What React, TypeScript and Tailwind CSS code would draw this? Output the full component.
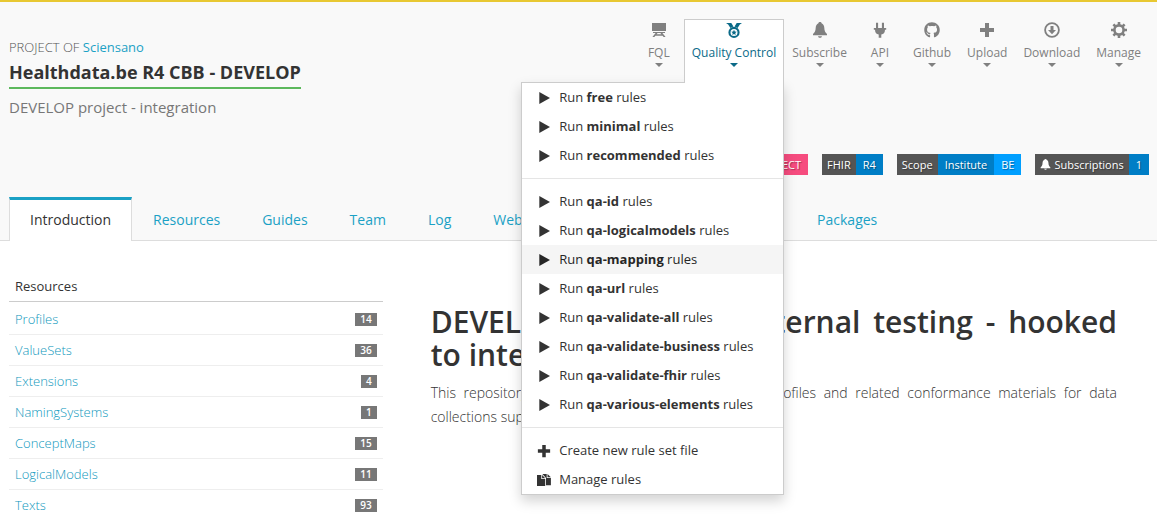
import type { ReactNode } from "react";
import { FaGithub } from "react-icons/fa";

type IconProps = { className?: string };

function ScreenIcon({ className }: IconProps) {
  return (
    <svg viewBox="0 0 16 16" fill="currentColor" className={className} aria-hidden="true">
      <path d="M1 1h14v8H1zM2 10h12v1H2z" />
      <path d="M4.600 11h2l-1 1.300h4.800l-1-1.300h2l3.200 4h-2l-1-1.300H4.400L3.400 15h-2z" />
    </svg>
  );
}

function MedalIcon({ className }: IconProps) {
  return (
    <svg viewBox="0 0 16 16" fill="currentColor" className={className} aria-hidden="true">
      <path d="M0 1h5.300l2.100 3.600-3 1.500L2.200 2.400zM16 1h-5.300L8.600 4.600l3 1.500 2.200-3.700z" />
      <path
        fillRule="evenodd"
        d="M8 4.800a5.600 5.600 0 1 1 0 11.200A5.600 5.600 0 0 1 8 4.800zm0 2.100a3.500 3.500 0 1 0 0 7 3.500 3.500 0 0 0 0-7z"
      />
      <path d="M8 7.800l.8 1.700 1.900.2-1.400 1.300.4 1.900L8 12l-1.700.9.4-1.900-1.400-1.300 1.900-.2z" />
    </svg>
  );
}

function BellIcon({ className }: IconProps) {
  return (
    <svg viewBox="0 0 16 16" fill="currentColor" className={className} aria-hidden="true">
      <path d="M8 0c.9 0 1.500.5 1.600 1.200 1.600.7 2.600 2.300 2.700 4.500.1 3 .9 4.700 2.700 6.300v1.300H1V12c1.800-1.600 2.600-3.300 2.700-6.300.1-2.200 1.100-3.800 2.700-4.500C6.500.5 7.100 0 8 0zM6 14.200h4c-.3 1-1 1.500-2 1.500s-1.700-.5-2-1.500z" />
    </svg>
  );
}

function PlugIcon({ className }: IconProps) {
  return (
    <svg viewBox="0 0 16 16" fill="currentColor" className={className} aria-hidden="true">
      <path d="M4 .8h2.100V6H4zM9.900.8H12V6H9.900zM1.800 6h12.400v1.700H13c0 2.900-1.500 4.500-3.700 4.900v3.200H6.700v-3.200C4.500 12.200 3 10.600 3 7.700H1.800z" />
    </svg>
  );
}

function PlusIcon({ className }: IconProps) {
  return (
    <svg viewBox="0 0 16 16" fill="currentColor" className={className} aria-hidden="true">
      <path d="M6 1h4v5h5v4h-5v5H6v-5H1V6h5z" />
    </svg>
  );
}

function DownloadIcon({ className }: IconProps) {
  return (
    <svg viewBox="0 0 16 16" fill="currentColor" className={className} aria-hidden="true">
      <circle cx="8" cy="8" r="6.900" fill="none" stroke="currentColor" strokeWidth="1.800" />
      <path d="M6.500 4h3v4H12l-4 4.300L4 8h2.500z" />
    </svg>
  );
}

function GearIcon({ className }: IconProps) {
  return (
    <svg viewBox="0 0 16 16" className={className} aria-hidden="true">
      <circle cx="8" cy="8" r="4.600" fill="none" stroke="currentColor" strokeWidth="2.600" />
      <g stroke="currentColor" strokeWidth="2.600">
        <path d="M8 0v3M8 13v3M0 8h3M13 8h3M2.400 2.400l2.100 2.100M11.500 11.500l2.100 2.100M2.400 13.600l2.100-2.100M11.500 4.500l2.100-2.100" />
      </g>
    </svg>
  );
}

function PlayIcon({ className }: IconProps) {
  return (
    <svg viewBox="0 0 14 14" fill="currentColor" className={className} aria-hidden="true">
      <path d="M2.300 1 13 7 2.300 13z" />
    </svg>
  );
}

function FilesIcon({ className }: IconProps) {
  return (
    <svg viewBox="0 0 14 14" fill="currentColor" className={className} aria-hidden="true">
      <path d="M0 1.900h4.300V6h3.900v7.100H0zM5.100 1.900l3.100 3.300H5.100z" />
      <path d="M5.400.9h4.300V5h4.200v7.200H9V4.900zM10.500.9l3.400 3.300h-3.400z" />
    </svg>
  );
}

function Caret() {
  return (
    <svg viewBox="0 0 8 4" fill="currentColor" className="h-1 w-2" aria-hidden="true">
      <path d="M0 0h8L4 4z" />
    </svg>
  );
}

function NavButton({ icon, label, open = false }: { icon: ReactNode; label: string; open?: boolean }) {
  return (
    <button
      type="button"
      aria-expanded={open}
      className={
        open
          ? "relative z-20 flex h-16 min-w-[50px] flex-col items-center border border-b-0 border-[#ccc] bg-white px-[7px] pt-0.5 text-[#0b6a88]"
          : "flex h-16 min-w-[50px] flex-col items-center border border-b-0 border-transparent px-[7px] pt-0.5 text-[#808080]"
      }
    >
      {icon}
      <span className="mt-[5px] text-xs leading-5">{label}</span>
      <Caret />
    </button>
  );
}

const ruleGroups = [
  ["free", "minimal", "recommended"],
  [
    "qa-id",
    "qa-logicalmodels",
    "qa-mapping",
    "qa-url",
    "qa-validate-all",
    "qa-validate-business",
    "qa-validate-fhir",
    "qa-various-elements",
  ],
];

function MenuItem({ icon, active = false, children }: { icon: ReactNode; active?: boolean; children: ReactNode }) {
  return (
    <li>
      <button
        type="button"
        className={
          active
            ? "flex w-full items-center gap-2 bg-[#f5f5f5] px-[15px] py-[5px] text-left text-[#262626]"
            : "flex w-full items-center gap-2 px-[15px] py-[5px] text-left"
        }
      >
        {icon}
        <span>{children}</span>
      </button>
    </li>
  );
}

function RulesMenu() {
  return (
    <div className="absolute top-[63px] right-0 z-10 w-[263px] border border-[#ccc] bg-white text-[13px] leading-[19px] text-[#333] shadow-[0_6px_12px_rgba(0,0,0,0.175)]">
      {ruleGroups.map((group) => (
        <ul key={group[0]} className="mb-2 border-b border-[#e5e5e5] pb-2">
          {group.map((rule) => (
            <MenuItem key={rule} active={rule === "qa-mapping"} icon={<PlayIcon className="size-3.5" />}>
              Run <b className="font-bold">{rule}</b> rules
            </MenuItem>
          ))}
        </ul>
      ))}
      <ul>
        <MenuItem icon={<PlusIcon className="size-3.5" />}>Create new rule set file</MenuItem>
        <MenuItem icon={<FilesIcon className="size-3.5" />}>Manage rules</MenuItem>
      </ul>
    </div>
  );
}

function Badges() {
  return (
    <div className="flex gap-3.5 text-[11px] leading-[21px] whitespace-nowrap text-white text-shadow-[1px_1px_1px_rgba(0,0,0,0.35)]">
      <span className="bg-[#f64c7f] px-[7px]">PROJECT</span>
      <span className="flex">
        <span className="bg-[#555] px-[5px]">FHIR</span>
        <span className="bg-[#007ec6] px-[7px]">R4</span>
      </span>
      <span className="flex">
        <span className="bg-[#555] px-[5px]">Scope</span>
        <span className="bg-[#007ec6] px-[7px]">Institute</span>
        <span className="bg-[#009fff] px-[7px]">BE</span>
      </span>
      <span className="flex">
        <span className="flex items-center gap-[3px] bg-[#555] px-[5px]">
          <BellIcon className="size-[11px]" />
          Subscriptions
        </span>
        <span className="bg-[#007ec6] px-[7px]">1</span>
      </span>
    </div>
  );
}

const tabs = ["Introduction", "Resources", "Guides", "Team", "Log", "Webhooks", "Tasks", "Dependencies", "Packages"];

const resources = [
  { name: "Profiles", count: 14 },
  { name: "ValueSets", count: 36 },
  { name: "Extensions", count: 4 },
  { name: "NamingSystems", count: 1 },
  { name: "ConceptMaps", count: 15 },
  { name: "LogicalModels", count: 11 },
  { name: "Texts", count: 93 },
];

export default function App() {
  return (
    <div className="bg-white font-['Open_Sans',sans-serif] text-[#333]">
      <header className="border-t-2 border-[#e8c832] bg-[#f9f9f9]">
        <div className="flex justify-between px-2">
          <div className="pt-[35px] pl-px">
            <p className="text-[13px] leading-5 font-light text-[#555]">
              PROJECT OF{" "}
              <a href="#sciensano" className="font-normal text-[#1ba1c5]">
                Sciensano
              </a>
            </p>
            <h1 className="mt-[3px] border-b-2 border-[#5cb85c] pb-[3px] text-lg leading-6 font-bold">
              Healthdata.be R4 CBB - DEVELOP
            </h1>
            <p className="mt-1.5 text-[15px] leading-6 text-[#777]">DEVELOP project - integration</p>
          </div>
          <div className="flex flex-col items-end pt-[17px]">
            <nav className="flex">
              <NavButton label="FQL" icon={<ScreenIcon className="size-4" />} />
              <div className="relative">
                <NavButton label="Quality Control" open icon={<MedalIcon className="size-4" />} />
                <RulesMenu />
              </div>
              <NavButton label="Subscribe" icon={<BellIcon className="size-4" />} />
              <NavButton label="API" icon={<PlugIcon className="size-4" />} />
              <NavButton label="Github" icon={<FaGithub className="size-4" />} />
              <NavButton label="Upload" icon={<PlusIcon className="size-4" />} />
              <NavButton label="Download" icon={<DownloadIcon className="size-4" />} />
              <NavButton label="Manage" icon={<GearIcon className="size-4" />} />
            </nav>
            <div className="mt-[71px] mb-[22px]">
              <Badges />
            </div>
          </div>
        </div>
        <nav className="flex border-b border-[#ddd] pl-[9px] text-sm leading-5">
          {tabs.map((tab, i) => (
            <a
              key={tab}
              href={`#${tab.toLowerCase()}`}
              className={
                i === 0
                  ? "-mb-px border-x border-t-3 border-x-[#ddd] border-t-[#1ba1c5] bg-white px-5 pt-2.5 pb-[11px]"
                  : "border-x border-transparent px-5 pt-[13px] pb-2.5 text-[#1ba1c5]"
              }
            >
              {tab}
            </a>
          ))}
        </nav>
      </header>
      <main className="flex">
        <aside className="w-1/3 pt-[31px] pr-[3px] pl-[9px] text-[13px] leading-5">
          <h2 className="border-b border-[#ccc] px-1.5 pt-1 pb-[5px]">Resources</h2>
          <ul className="pt-0.5">
            {resources.map((item) => (
              <li
                key={item.name}
                className="flex items-center justify-between border-b border-[#eee] px-1.5 py-[5px] last:border-b-0 last:pb-0"
              >
                <a href={`#${item.name}`} className="font-light text-[#0f98bd]">
                  {item.name}
                </a>
                <span className="bg-[#777] px-[5px] text-[10px] leading-[13px] font-semibold text-white">
                  {item.count}
                </span>
              </li>
            ))}
          </ul>
        </aside>
        <article className="flex-1 pt-16 pr-10 pl-[45px] text-justify">
          <h2 className="text-[30px] leading-[33px] font-semibold">
            DEVELOP project for internal testing - hooked to integration
          </h2>
          <p className="mt-2.5 text-sm leading-6 font-light">
            This repository contains HL7-FHIR implementation profiles and related conformance materials for data
            collections supported by Healthdata.be
          </p>
        </article>
      </main>
    </div>
  );
}
